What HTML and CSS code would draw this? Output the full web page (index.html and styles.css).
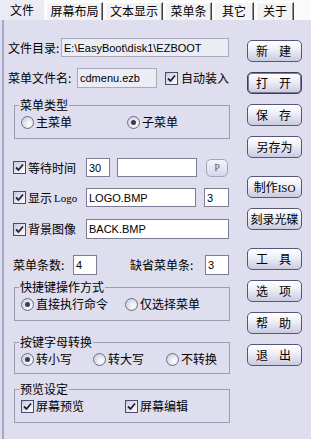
FILE: index.html
```html
<!DOCTYPE html>
<html lang="zh-CN">

<head>
  <meta charset="UTF-8">
  <title>EasyBoot</title>
  <link rel="stylesheet" href="styles.css">
</head>

<body>
  <div class="window">
    <div class="tabs">
      <span class="tab active">文件</span>
      <span class="tab">屏幕布局</span>
      <span class="tab">文本显示</span>
      <span class="tab">菜单条</span>
      <span class="tab">其它</span>
      <span class="tab">关于</span>
    </div>

    <div class="panel">
      <div class="form">
        <div class="row row-dir">
          <span class="label w53">文件目录:</span>
          <input class="field ro w168" type="text" value="E:\EasyBoot\disk1\EZBOOT">
        </div>

        <div class="row row-tall row-file">
          <span class="label w69">菜单文件名:</span>
          <input class="field ro w80" type="text" value="cdmenu.ezb">
          <label class="opt auto"><span class="check"><svg width="9" height="9" viewBox="0 0 9 9"><path d="M1 4.5 L3.5 7 L8 1.5" stroke="#20203c" stroke-width="1.8" fill="none"/></svg></span>自动装入</label>
        </div>

        <fieldset class="group g-type">
          <legend>菜单类型</legend>
          <div class="opts cols-106">
            <label class="opt"><span class="radio"></span>主菜单</label>
            <label class="opt"><span class="radio on"></span>子菜单</label>
          </div>
        </fieldset>

        <div class="row row-wait">
          <label class="opt lead"><span class="check"><svg width="9" height="9" viewBox="0 0 9 9"><path d="M1 4.5 L3.5 7 L8 1.5" stroke="#20203c" stroke-width="1.8" fill="none"/></svg></span>等待时间</label>
          <input class="field w24" type="text" value="30">
          <input class="field w80 gap7" type="text" value="">
          <span class="pbtn">P</span>
        </div>

        <div class="row row-logo">
          <label class="opt lead"><span class="check"><svg width="9" height="9" viewBox="0 0 9 9"><path d="M1 4.5 L3.5 7 L8 1.5" stroke="#20203c" stroke-width="1.8" fill="none"/></svg></span>显示<span class="latin">Logo</span></label>
          <input class="field w110" type="text" value="LOGO.BMP">
          <input class="field w25 gap8" type="text" value="3">
        </div>

        <div class="row row-tall row-back">
          <label class="opt lead"><span class="check"><svg width="9" height="9" viewBox="0 0 9 9"><path d="M1 4.5 L3.5 7 L8 1.5" stroke="#20203c" stroke-width="1.8" fill="none"/></svg></span>背景图像</label>
          <input class="field w143" type="text" value="BACK.BMP">
        </div>

        <div class="row row-tall row-count">
          <span class="label w60 indent">菜单条数:</span>
          <input class="field w24" type="text" value="4">
          <span class="label w75 gap33">缺省菜单条:</span>
          <input class="field w24" type="text" value="3">
        </div>

        <fieldset class="group g-hotkey">
          <legend>快捷键操作方式</legend>
          <div class="opts cols-104">
            <label class="opt"><span class="radio on"></span>直接执行命令</label>
            <label class="opt"><span class="radio"></span>仅选择菜单</label>
          </div>
        </fieldset>

        <fieldset class="group g-case">
          <legend>按键字母转换</legend>
          <div class="opts cols-3">
            <label class="opt"><span class="radio on"></span>转小写</label>
            <label class="opt"><span class="radio"></span>转大写</label>
            <label class="opt"><span class="radio"></span>不转换</label>
          </div>
        </fieldset>

        <fieldset class="group g-preview">
          <legend>预览设定</legend>
          <div class="opts cols-104">
            <label class="opt"><span class="check"><svg width="9" height="9" viewBox="0 0 9 9"><path d="M1 4.5 L3.5 7 L8 1.5" stroke="#20203c" stroke-width="1.8" fill="none"/></svg></span>屏幕预览</label>
            <label class="opt"><span class="check"><svg width="9" height="9" viewBox="0 0 9 9"><path d="M1 4.5 L3.5 7 L8 1.5" stroke="#20203c" stroke-width="1.8" fill="none"/></svg></span>屏幕编辑</label>
          </div>
        </fieldset>
      </div>

      <div class="actions">
        <button class="btn wide">新建</button>
        <button class="btn wide focus">打开</button>
        <button class="btn wide">保存</button>
        <button class="btn">另存为</button>
        <button class="btn sep">制作<span class="iso">ISO</span></button>
        <button class="btn">刻录光碟</button>
        <button class="btn wide sep">工具</button>
        <button class="btn wide">选项</button>
        <button class="btn wide">帮助</button>
        <button class="btn wide">退出</button>
      </div>
    </div>
  </div>
</body>

</html>
```

FILE: styles.css
```css
/* document */
* {
  box-sizing: border-box;
}

body {
  margin: 0;
  font: 12px/16px "Noto Sans CJK SC", "Liberation Sans", sans-serif;
  color: #000;
}

/* window */
.window {
  width: 311px;
  height: 439px;
  display: flex;
  flex-direction: column;
  background: #dedeee;
  overflow: hidden;
}

/* tab strip */
.tabs {
  height: 20px;
  display: flex;
  align-items: flex-end;
  gap: 2px;
  background: #fafafa;
}

.tab {
  height: 18px;
  background: #f3f3f5;
  border-top: 1px solid #fff;
  border-left: 1px solid #fff;
  border-right: 1px solid #404040;
  box-shadow: inset -1px 0 #8e8e8e;
  text-align: center;
  line-height: 16px;
}

.tab:nth-child(1) { width: 44px; }
.tab:nth-child(2) { width: 57px; }
.tab:nth-child(3) { width: 58px; }
.tab:nth-child(4) { width: 47px; }
.tab:nth-child(5) { width: 40px; }
.tab:nth-child(6) { width: 38px; }

.tab.active {
  height: 20px;
  padding-top: 2px;
  background: #ebebf5;
  border: none;
  box-shadow: none;
}

/* main panel */
.panel {
  flex: 1;
  display: flex;
  margin-left: 2px;
  border-left: 2px solid #a6a6ca;
}

.form {
  width: 226px;
  padding: 18px 0 0 4px;
}

/* rows */
.row {
  height: 19px;
  display: flex;
  align-items: center;
}

.row-tall { height: 20px; }
.row-file { margin-top: 11px; }
.row-wait { margin-top: 19px; }
.row-logo { margin-top: 11px; }
.row-back { margin-top: 12px; }
.row-count { margin-top: 16px; }

.label {
  flex: none;
  white-space: nowrap;
}

/* text fields */
.field {
  flex: none;
  height: 100%;
  margin: 0;
  padding: 0 2px;
  border: 1px solid #7c7c96;
  background: #fff;
  font: 11px "Liberation Sans", Arial, sans-serif;
  color: #000;
}

.field.ro {
  background: #ececf4;
  border-color: #a9a9bd;
}

/* widths and offsets */
.w24 { width: 24px; }
.w25 { width: 25px; }
.w53 { width: 53px; }
.w60 { width: 60px; }
.w69 { width: 69px; }
.w75 { width: 75px; }
.w80 { width: 80px; }
.w110 { width: 110px; }
.w143 { width: 143px; }
.w168 { width: 168px; }
.indent { margin-left: 5px; }
.gap7 { margin-left: 7px; }
.gap8 { margin-left: 8px; }
.gap33 { margin-left: 33px; }

.pbtn {
  width: 22px;
  height: 18px;
  margin-left: 9px;
  border: 1px solid #a4a4c2;
  border-radius: 5px;
  background: linear-gradient(#f4f4fa, #d6d6e8);
  color: #5c5c7c;
  font: 10px/16px "Liberation Serif", serif;
  text-align: center;
}

/* checkbox / radio options */
.opt {
  display: flex;
  align-items: center;
  gap: 2px;
  white-space: nowrap;
}

.opt.lead {
  width: 73px;
  margin-left: 5px;
  flex: none;
}

.opt.auto { margin-left: 8px; gap: 3px; }

.latin {
  font: 11px "Liberation Serif", serif;
}

.check {
  width: 13px;
  height: 13px;
  flex: none;
  display: grid;
  place-items: center;
  border: 1px solid #4a4a6a;
  background: linear-gradient(135deg, #c8c8dc, #fff);
}

.radio {
  width: 13px;
  height: 13px;
  flex: none;
  display: grid;
  place-items: center;
  border: 1px solid #6c6c8a;
  border-radius: 50%;
  background: radial-gradient(circle at 65% 65%, #fff, #c6c6da);
}

.radio.on::after {
  content: "";
  width: 5px;
  height: 5px;
  border-radius: 50%;
  background: #3a3a56;
}

/* group boxes */
.group {
  width: 216px;
  margin: 9px 0 0 6px;
  padding: 0 0 8px 6px;
  border: 1px solid #9c9cb4;
}

.group legend {
  margin-left: -2px;
  padding: 0 1px;
  line-height: 16px;
}

.g-hotkey { margin-top: 4px; }
.g-case { margin-top: 13px; padding-bottom: 6px; }
.g-preview { margin-top: 7px; }

.opts {
  display: grid;
  height: 16px;
  margin-top: 1px;
}

.cols-106 { grid-template-columns: 106px auto; }
.cols-104 { grid-template-columns: 104px auto; }
.cols-3 { grid-template-columns: 72px 73px auto; }

/* buttons column */
.actions {
  width: 55px;
  margin-left: 17px;
  padding-top: 20px;
  display: flex;
  flex-direction: column;
}

.btn {
  height: 22px;
  margin: 10px 0 0;
  padding: 0;
  border: 1px solid #56567a;
  border-radius: 5px;
  background: linear-gradient(#ffffff, #f0f0f8 40%, #cacae0);
  font: 12px/20px "Noto Sans CJK SC", sans-serif;
  color: #000;
  text-align: center;
  white-space: nowrap;
}

.btn:first-child { margin-top: 0; }
.btn.sep { margin-top: 18px; }

.btn.wide {
  padding-left: 8px;
  letter-spacing: 11px;
  text-align: left;
}

.btn.focus {
  border-color: #3c3c5c;
  box-shadow: inset 0 0 0 1px #7a7a9c;
}

.iso {
  font: 11px "Liberation Serif", serif;
}
```
